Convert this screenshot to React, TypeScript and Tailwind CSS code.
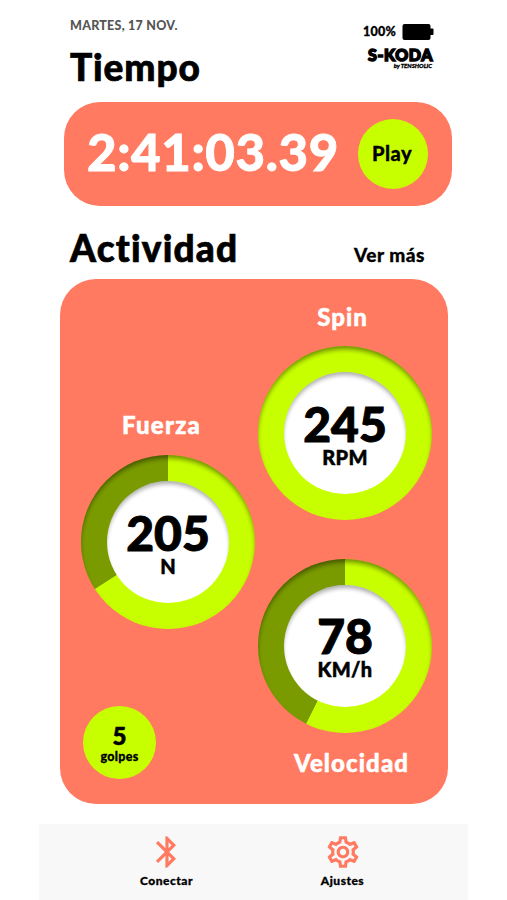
import type { ReactNode } from 'react';
import { MdBluetooth, MdOutlineSettings } from 'react-icons/md';

type GaugeProps = {
  value: string;
  unit: string;
  degrees: number;
  unitClass: string;
};

function Gauge({ value, unit, degrees, unitClass }: GaugeProps) {
  const background =
    degrees >= 360
      ? '#c8ff00'
      : `conic-gradient(#c8ff00 ${degrees}deg, #7a9b00 ${degrees + 0.5}deg)`;
  return (
    <div
      className="flex h-[174px] w-[174px] shrink-0 items-center justify-center rounded-full shadow-[inset_0_4px_5px_-1px_rgba(0,0,0,0.45)]"
      style={{ background }}
    >
      <div className="flex h-[122px] w-[122px] flex-col items-center rounded-full bg-white pt-[27.5px] whitespace-nowrap text-black shadow-[inset_0_4px_4px_-1px_rgba(0,0,0,0.32)]">
        <span className="h-[47px] text-[48px] leading-none [-webkit-text-stroke:1px]">{value}</span>
        <span className={unitClass}>{unit}</span>
      </div>
    </div>
  );
}

function NavItem({ icon, label, className }: { icon: ReactNode; label: string; className: string }) {
  return (
    <button className={className}>
      <span className="text-[#ff7a60]">{icon}</span>
      {label}
    </button>
  );
}

function Battery() {
  return (
    <svg width="32" height="16" viewBox="0 0 32 16">
      <rect x="0.5" y="0" width="28" height="16" rx="2" />
      <rect x="26" y="4.5" width="5.5" height="6.5" rx="1" />
    </svg>
  );
}

export default function App() {
  return (
    <div className="flex h-[900px] w-[507px] flex-col overflow-hidden bg-white font-['Lato',sans-serif] font-black text-black [font-variant-ligatures:none] [-webkit-text-stroke:0.3px]">
      <header className="flex h-[102px] justify-between pr-[73px] pl-[70px]">
        <div className="flex flex-col pt-[20px] whitespace-nowrap">
          <p className="text-[12.5px] leading-none tracking-[0.25px] text-[#555] [-webkit-text-stroke:0px]">MARTES, 17 NOV.</p>
          <h1 className="mt-[15px] text-[37px] leading-none tracking-[0.9px] [-webkit-text-stroke:0.7px]">Tiempo</h1>
        </div>
        <div className="flex flex-col items-end pt-[24px]">
          <div className="flex h-[16px] items-center gap-[6px]">
            <span className="text-[12.5px] leading-none tracking-[0.2px]">100%</span>
            <Battery />
          </div>
          <div className="mt-[7px] mr-[1px] text-[16px] leading-none tracking-[0.6px] [-webkit-text-stroke:1.5px]">S-KODA</div>
          <div className="mr-[2px] text-[6px] leading-none italic">by TENSHOLIC</div>
        </div>
      </header>

      <section className="ml-[64px] flex h-[104px] w-[388px] items-center justify-between rounded-[36px] bg-[#ff7a60] pr-[24px] pl-[23px]">
        <span className="pb-[6px] text-[51px] leading-none tracking-[0.6px] whitespace-nowrap text-white [-webkit-text-stroke:0.8px]">2:41:03.39</span>
        <button className="h-[70px] w-[70px] rounded-full bg-[#c8ff00] pr-[2px] pb-[2px] text-[20px] leading-none tracking-[0.5px]">Play</button>
      </section>

      <div className="flex h-[73px] items-start justify-between pr-[82px] pl-[70px] whitespace-nowrap">
        <h2 className="mt-[23px] text-[37px] leading-none tracking-[1.2px] [-webkit-text-stroke:0.7px]">Actividad</h2>
        <a className="mt-[39px] text-[19px] leading-none tracking-[0.5px]">Ver más</a>
      </div>

      <section className="ml-[60px] flex h-[525px] w-[388px] gap-[3px] rounded-[36px] bg-[#ff7a60] pl-[21px]">
        <div className="flex w-[174px] flex-col">
          <h3 className="mt-[134px] mb-[18px] pr-[13px] text-center text-[24px] leading-none tracking-[1.2px] text-white [-webkit-text-stroke:0.5px]">Fuerza</h3>
          <Gauge value="205" unit="N" degrees={237} unitClass="text-[20px] leading-none [-webkit-text-stroke:0.5px]" />
          <div className="mt-[77px] ml-[2px] flex h-[73px] w-[73px] flex-col items-center rounded-full bg-[#c8ff00] pt-[18px]">
            <span className="text-[24px] leading-none [-webkit-text-stroke:0.6px]">5</span>
            <span className="mt-[3px] text-[12.5px] leading-none tracking-[0.3px]">golpes</span>
          </div>
        </div>
        <div className="flex w-[174px] flex-col">
          <h3 className="mt-[26px] mb-[17px] pr-[5px] text-center text-[24px] leading-none tracking-[1px] text-white [-webkit-text-stroke:0.5px]">Spin</h3>
          <Gauge value="245" unit="RPM" degrees={360} unitClass="text-[20px] leading-none tracking-[0.3px] [-webkit-text-stroke:0.5px]" />
          <div className="h-[38.5px]" />
          <Gauge value="78" unit="KM/h" degrees={206.3} unitClass="text-[20px] leading-none tracking-[0.3px] [-webkit-text-stroke:0.5px]" />
          <h3 className="mt-[18px] pl-[13px] text-center text-[24px] leading-none tracking-[1.1px] text-white [-webkit-text-stroke:0.5px]">Velocidad</h3>
        </div>
      </section>

      <nav className="mt-[20px] ml-[38.5px] flex h-[76px] w-[429.5px] justify-start bg-[#f8f8f8] pt-[9px] text-[12px] leading-none tracking-[0.5px]">
        <NavItem
          icon={<MdBluetooth size={38} strokeWidth={0} />}
          label="Conectar"
          className="ml-[88px] flex w-[80px] flex-col items-center gap-[4px]"
        />
        <NavItem
          icon={<MdOutlineSettings size={38} strokeWidth={0} />}
          label="Ajustes"
          className="ml-[96px] flex w-[80px] flex-col items-center gap-[4px]"
        />
      </nav>
    </div>
  );
}
